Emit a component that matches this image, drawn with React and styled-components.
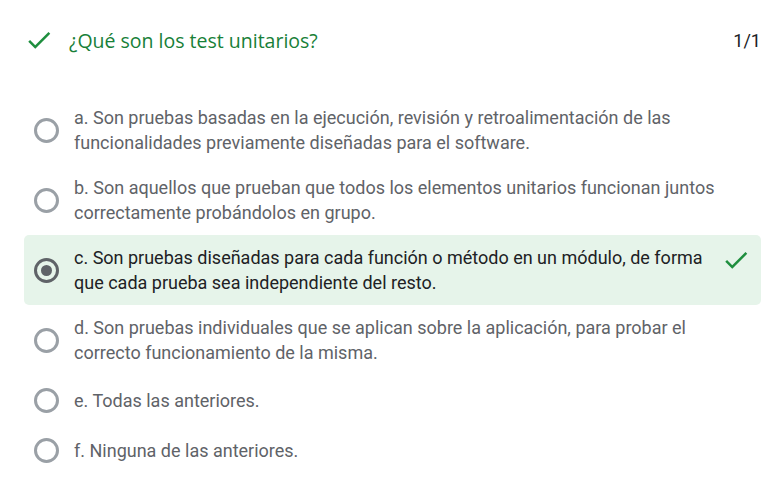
import React from "react";
import styled, { createGlobalStyle } from "styled-components";

const Global = createGlobalStyle`
  html, body { margin: 0; padding: 0; background: #fff; }
  body { font-family: Roboto, "Liberation Sans", sans-serif; }
`;

const Page = styled.div`
  width: 763px;
  height: 496px;
  box-sizing: border-box;
  padding: 0 2px 0 24px;
  display: flex;
  flex-direction: column;
`;

const Header = styled.div`
  height: 80px;
  display: flex;
  align-items: center;
  box-sizing: border-box;
`;

const HeaderCheck = styled.svg`
  width: 30px;
  height: 30px;
  flex: none;
  margin-right: 15px;
`;

const Title = styled.div`
  flex: 1;
  font-family: "Open Sans", Roboto, sans-serif;
  font-size: 19.5px;
  color: #188038;
`;

const Score = styled.div`
  font-size: 18px;
  color: #202124;
`;

const Options = styled.div`
  display: flex;
  flex-direction: column;
  margin-top: 15px;
`;

const Row = styled.div`
  display: flex;
  align-items: center;
  padding: 10px 10px 10px 10px;
  min-height: 30px;
  border-radius: 5px;
  background: ${(p) => (p.$correct ? "#e6f4ea" : "transparent")};
`;

const Radio = styled.span`
  width: 25px;
  height: 25px;
  box-sizing: border-box;
  border: 3px solid ${(p) => (p.$checked ? "#5f6368" : "#9aa0a6")};
  border-radius: 50%;
  flex: none;
  margin-right: 15px;
  display: flex;
  align-items: center;
  justify-content: center;
  &::after {
    content: "";
    display: ${(p) => (p.$checked ? "block" : "none")};
    width: 11px;
    height: 11px;
    border-radius: 50%;
    background: #5f6368;
  }
`;

const Label = styled.div`
  flex: 1;
  max-width: 646px;
  font-size: 18px;
  line-height: 25px;
  color: ${(p) => (p.$checked ? "#202124" : "#5f6368")};
`;

const RowCheck = styled.svg`
  width: 30px;
  height: 30px;
  margin-left: auto;
  flex: none;
  align-self: flex-start;
`;

const Check = (props) => (
  <svg viewBox="0 0 24 24" {...props}>
    <path d="M9 16.17 4.83 12l-1.42 1.41L9 19 21 7l-1.41-1.41z" fill="#1e8e3e" />
  </svg>
);

const options = [
  { t: "a. Son pruebas basadas en la ejecución, revisión y retroalimentación de las funcionalidades previamente diseñadas para el software." },
  { t: "b. Son aquellos que prueban que todos los elementos unitarios funcionan juntos correctamente probándolos en grupo." },
  { t: "c. Son pruebas diseñadas para cada función o método en un módulo, de forma que cada prueba sea independiente del resto.", c: true },
  { t: "d. Son pruebas individuales que se aplican sobre la aplicación, para probar el correcto funcionamiento de la misma." },
  { t: "e. Todas las anteriores." },
  { t: "f. Ninguna de las anteriores." },
];

export default function App() {
  return (
    <>
      <Global />
      <Page>
        <Header>
          <HeaderCheck as={Check} />
          <Title>¿Qué son los test unitarios?</Title>
          <Score>1/1</Score>
        </Header>
        <Options>
          {options.map((o, i) => (
            <Row key={i} $correct={o.c}>
              <Radio $checked={o.c} />
              <Label $checked={o.c}>{o.t}</Label>
              {o.c && <RowCheck as={Check} />}
            </Row>
          ))}
        </Options>
      </Page>
    </>
  );
}
